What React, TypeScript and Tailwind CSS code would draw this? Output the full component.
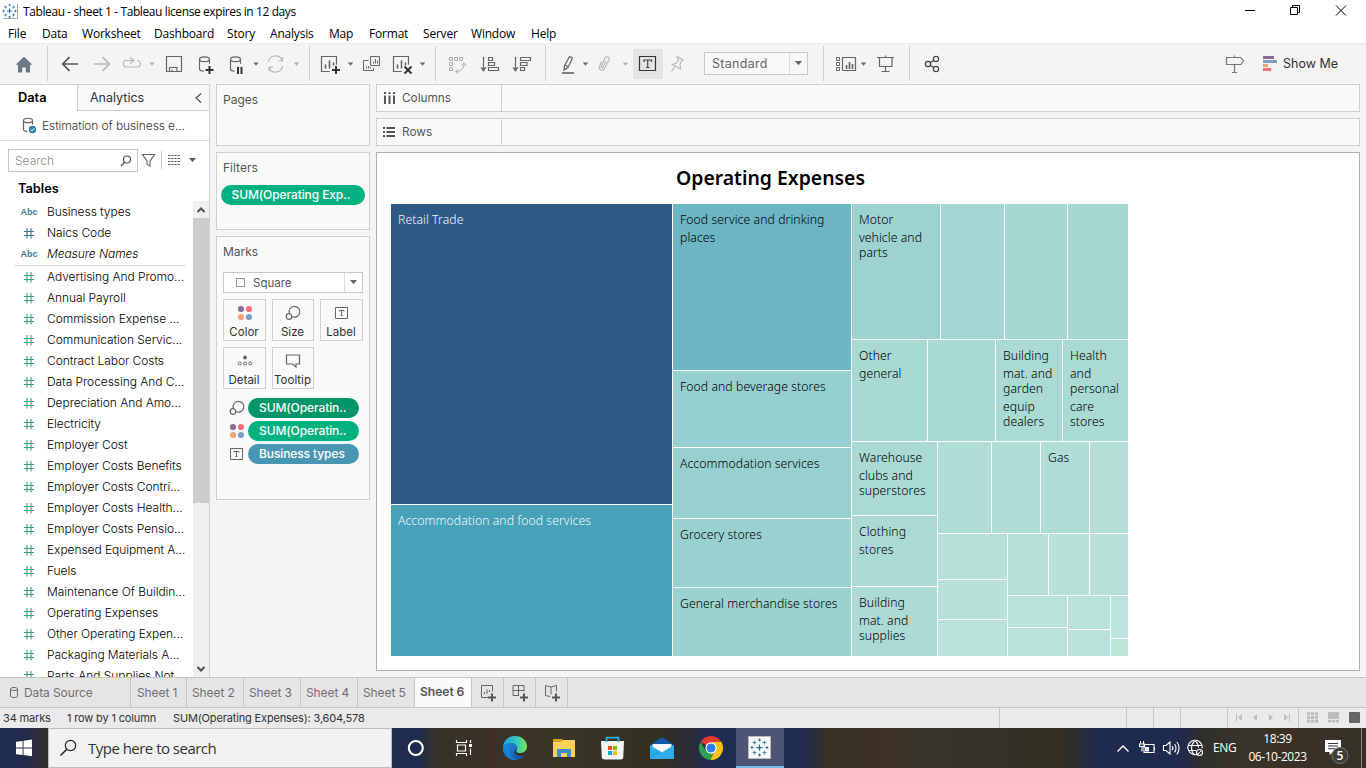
import React from 'react';

type Box = { c?: string; label?: string[]; light?: boolean; w?: string; h?: string };

/* A glyph slot whose drawing uses window coordinates. */
function Slot({ x, y, w, h, children }: { x: number; y: number; w: number; h: number; children?: React.ReactNode }) {
  return (
    <svg className="block shrink-0" width={w} height={h} viewBox={`${x} ${y} ${w} ${h}`} fill="none" stroke="#666" strokeWidth="1.2">
      {children}
    </svg>
  );
}

const Caret = ({ x, y = 64, c = '#666' }: { x: number; y?: number; c?: string }) => (
  <path d={`M${x - 2.7} ${y - 1.5}h5.4L${x} ${y + 1.8}z`} fill={c} stroke="none" />
);

const Divider = () => <div className="h-[35px] w-px shrink-0 bg-[#cfcfcf]" />;

function Cell({ c = 'bg-[#a9dad4]', label, light, w = '', h = '' }: Box) {
  return (
    <div className={`${c} ${w} ${h} shrink-0 overflow-hidden pl-[7px] pt-[8px] text-[12.2px] leading-[16.6px] font-light tracking-[0.08px] whitespace-nowrap ${light ? 'text-[#f4f8fb]' : 'text-[#000]'}`}>
      {label?.map((l, i) => <div key={l} className={i % 2 === 1 ? 'pt-px -mb-px' : ''}>{l}</div>)}
    </div>
  );
}

function Treemap() {
  return (
    <div className="flex h-[452px] w-[737px] gap-px bg-white font-['Noto_Sans',sans-serif]">
      <div className="flex w-[281px] flex-col gap-px">
        <Cell c="bg-[#2c5985]" h="h-[300px]" light label={['Retail Trade']} />
        <Cell c="bg-[#46a1b9]" h="h-[151px]" light label={['Accommodation and food services']} />
      </div>
      <div className="flex w-[178px] flex-col gap-px">
        <Cell c="bg-[#6cb6c4]" h="h-[166px]" label={['Food service and drinking', 'places']} />
        <Cell c="bg-[#96cfcf]" h="h-[76px]" label={['Food and beverage stores']} />
        <Cell c="bg-[#98d0d0]" h="h-[70px]" label={['Accommodation services']} />
        <Cell c="bg-[#99d1d0]" h="h-[68px]" label={['Grocery stores']} />
        <Cell c="bg-[#9ad2d0]" h="h-[68px]" label={['General merchandise stores']} />
      </div>
      <div className="flex w-[276px] flex-col gap-px">
        <div className="flex h-[135px] gap-px">
          <Cell c="bg-[#9cd3d1]" w="w-[88px]" label={['Motor', 'vehicle and', 'parts']} />
          <Cell c="bg-[#a4d7d3]" w="w-[63px]" />
          <Cell c="bg-[#a5d8d3]" w="w-[62px]" />
          <Cell c="bg-[#a6d8d3]" w="w-[60px]" />
        </div>
        <div className="flex h-[101px] gap-px">
          <Cell c="bg-[#a8d9d3]" w="w-[75px]" label={['Other', 'general']} />
          <Cell c="bg-[#a8d9d3]" w="w-[67px]" />
          <Cell c="bg-[#a9dad4]" w="w-[66px]" label={['Building', 'mat. and', 'garden', 'equip', 'dealers']} />
          <Cell c="bg-[#a9dad4]" w="w-[65px]" label={['Health', 'and', 'personal', 'care', 'stores']} />
        </div>
        <div className="flex h-[214px] gap-px">
          <div className="flex w-[85px] flex-col gap-px">
            <Cell c="bg-[#aadad4]" h="h-[73px]" label={['Warehouse', 'clubs and', 'superstores']} />
            <Cell c="bg-[#abdad4]" h="h-[70px]" label={['Clothing', 'stores']} />
            <Cell c="bg-[#acdbd5]" h="h-[69px]" label={['Building', 'mat. and', 'supplies']} />
          </div>
          <div className="flex w-[190px] flex-col gap-px">
            <div className="flex h-[91px] gap-px">
              <Cell c="bg-[#b0ddd6]" w="w-[53px]" />
              <Cell c="bg-[#b0ddd6]" w="w-[48px]" />
              <Cell c="bg-[#b1ddd7]" w="w-[48px]" label={['Gas']} />
              <Cell c="bg-[#b4dfd7]" w="w-[38px]" />
            </div>
            <div className="flex h-[122px] gap-px">
              <div className="flex w-[69px] flex-col gap-px">
                <Cell c="bg-[#b6e1d7]" h="h-[45px]" />
                <Cell c="bg-[#b7e2d8]" h="h-[39px]" />
                <Cell c="bg-[#b8e3d8]" h="h-[36px]" />
              </div>
              <div className="flex w-[120px] flex-col gap-px">
                <div className="flex h-[61px] gap-px">
                  <Cell c="bg-[#b6e1d7]" w="w-[40px]" />
                  <Cell c="bg-[#b7e2d8]" w="w-[40px]" />
                  <Cell c="bg-[#b7e2d8]" w="w-[38px]" />
                </div>
                <div className="flex h-[60px] gap-px">
                  <div className="flex w-[59px] flex-col gap-px">
                    <Cell c="bg-[#b8e3d8]" h="h-[31px]" />
                    <Cell c="bg-[#b8e3d8]" h="h-[28px]" />
                  </div>
                  <div className="flex w-[42px] flex-col gap-px">
                    <Cell c="bg-[#b9e3d9]" h="h-[33px]" />
                    <Cell c="bg-[#b9e3d9]" h="h-[26px]" />
                  </div>
                  <div className="flex w-[17px] flex-col gap-px">
                    <Cell c="bg-[#bbe5da]" h="h-[42px]" />
                    <Cell c="bg-[#bce5da]" h="h-[17px]" />
                  </div>
                </div>
              </div>
            </div>
          </div>
        </div>
      </div>
    </div>
  );
}

function TableauMark({ x, y, s }: { x: number; y: number; s: number }) {
  const plus = (cx: number, cy: number, r: number) => `M${cx - r} ${cy}h${2 * r}M${cx} ${cy - r}v${2 * r}`;
  return (
    <g transform={`translate(${x} ${y}) scale(${s})`} fill="none">
      <path d={plus(0, 0, 2.4)} stroke="#1f6a96" strokeWidth="1" />
      <path d={plus(-4, -4, 1.5) + plus(4, -4, 1.5) + plus(-4, 4, 1.5) + plus(4, 4, 1.5)} stroke="#4a8db5" strokeWidth=".9" />
      <path d={plus(0, -6, 1.2) + plus(0, 6, 1.2) + plus(-6, 0, 1.2) + plus(6, 0, 1.2)} stroke="#2f7ba6" strokeWidth=".9" />
    </g>
  );
}

function TitleBar() {
  return (
    <div className="flex h-[23px] items-center bg-white">
      <Slot x={0} y={0} w={23} h={23}>
        <path d="M3 18.5h14.500V4" stroke="#aaa" strokeWidth="1" />
        <TableauMark x={9.500} y={11} s={1} />
      </Slot>
      <span className="flex-1 pt-px text-[12px] tracking-[-0.4px] text-black">Tableau - sheet 1 - Tableau license expires in 12 days</span>
      <Slot x={1226} y={0} w={140} h={23}>
        <path d="M1245 10.500h10M1290.500 7.500h7v7h-7zM1292.500 7.500v-2h7v7h-2M1336 5.500l10 10M1346 5.500l-10 10" stroke="#000" strokeWidth="1" />
      </Slot>
    </div>
  );
}

const menus: [string, string][] = [
  ['File', 'w-[34px]'], ['Data', 'w-[40px]'], ['Worksheet', 'w-[72px]'], ['Dashboard', 'w-[73px]'], ['Story', 'w-[43px]'],
  ['Analysis', 'w-[59px]'], ['Map', 'w-[40px]'], ['Format', 'w-[54px]'], ['Server', 'w-[48px]'], ['Window', 'w-[60px]'], ['Help', 'w-[40px]'],
];

function ChartBox({ x, y, w, h, c = '#666' }: { x: number; y: number; w: number; h: number; c?: string }) {
  return (
    <g stroke={c}>
      <path d={`M${x + w * 0.55} ${y + h}H${x}V${y}H${x + w}V${y + h * 0.55}`} strokeWidth="1.2" />
      <path d={`M${x + 4} ${y + 12}v-4M${x + 8} ${y + 12}v-8M${x + 12} ${y + 9}v-3`} strokeWidth="1.600" />
    </g>
  );
}

function Toolbar() {
  return (
    <div className="flex h-[41px] items-center bg-[#f4f4f4] shadow-[inset_0_1px_0_#ececec]">
      <Slot x={0} y={43} w={47} h={41}>
        <path d="M24 56.700l8.500 8h-2.500v7.800h-4.200v-5h-3.600v5H18v-7.800h-2.500z" fill="#6c7786" stroke="none" />
      </Slot>
      <Divider />
      <Slot x={48} y={43} w={261} h={41}>
        <path d="M78 64H63M69.500 57.200L62.700 64l6.800 6.800" strokeWidth="1.700" stroke="#555" />
        <path d="M94 64h15M102.500 57.200l6.800 6.800-6.800 6.800" strokeWidth="1.700" stroke="#b8b8b8" />
        <path d="M133 60.500h-6.500a3 3 0 0 0 0 6.500H137a3.200 3.200 0 0 0 0-6.500M130 57.500l4 3-4 3" stroke="#b8b8b8" />
        <Caret x={152} c="#b0b0b0" />
        <path d="M166.500 56.500h15v15h-15zM169.500 71.500v-4h7.500v4M172 71.500v-2" />
        <path d="M199.500 59.200c0-3.200 10-3.200 10 0s-10 3.200-10 0zM199.500 59.200v9.500c0 1.600 2 2.300 4.500 2.400M209.500 59.200v4.500" />
        <path d="M205.500 70h8M209.500 66v8" stroke="#333" strokeWidth="2" />
        <path d="M230.500 59.200c0-3.200 10-3.200 10 0s-10 3.200-10 0zM230.500 59.200v9.500c0 1.600 2 2.300 4 2.400M240.500 59.200v4.500" />
        <path d="M238 67v7M241.500 67v7" stroke="#333" strokeWidth="2" />
        <Caret x={256} />
        <path d="M268.500 62a7 7 0 0 1 13.500-1.500M282.500 66a7 7 0 0 1-13.500 1.500M278.500 61h4v-4M273 67.200h-4v4" stroke="#b8b8b8" />
        <Caret x={296.500} c="#b0b0b0" />
      </Slot>
      <Divider />
      <Slot x={310} y={43} w={125} h={41}>
        <ChartBox x={321.500} y={56.500} w={15} h={15} />
        <path d="M332 70h8M336 66v8" stroke="#333" strokeWidth="2" />
        <Caret x={350.500} />
        <path d="M370.500 56.500h9v9h-9zM368.500 60.500h-5v10h10v-2.500M373.500 63.500v-2M375.500 63.500v-4.500M377.500 63.500v-3M366.500 68.500v-2M368.500 68.500v-2.500M370.500 68.500v-1.500" strokeWidth="1" />
        <ChartBox x={393.500} y={56.500} w={15} h={15} />
        <path d="M404.500 66.500l7 7M411.500 66.500l-7 7" stroke="#333" strokeWidth="2" />
        <Caret x={422.500} />
      </Slot>
      <Divider />
      <Slot x={436} y={43} w={109} h={41}>
        <path d="M449.500 57.500h3v3h-3zM454.500 57.500h3v3h-3zM459.500 57.500h3v3h-3zM449.500 62.500h3v3h-3zM449.500 67.500h3v3h-3zM456 71.500c5.500 0 8-3 8-8M461.500 66l2.500-3 2 3M458.500 69l-3 2.500 3 2" stroke="#b0b0b0" strokeWidth="1" />
        <path d="M483.500 57v13M481.500 68l2 3 2-3zM488.500 57.500h4v3h-4zM488.500 62.500h6v3h-6zM488.500 67.500h10v3h-10z" strokeWidth="1.200" />
        <path d="M515.500 57v13M513.500 68l2 3 2-3zM520.500 57.500h10v3h-10zM520.500 62.500h6.500v3h-6.500zM520.500 67.500h4v3h-4z" strokeWidth="1.200" />
      </Slot>
      <Divider />
      <Slot x={546} y={43} w={87} h={41}>
        <path d="M562 73h12" strokeWidth="1.700" />
        <path d="M569.500 56.500l3 1.500-4.500 9.500-4 2.500.5-4.200zM565 65l3.200 1.800" />
        <Caret x={585.500} />
        <path d="M601.500 61.500l-2 5a2.600 2.600 0 0 0 5 2l4.500-8.500a2 2 0 0 0-4-2l-3.800 8.300a.9.900 0 0 0 1.800.8l3-6" stroke="#b8b8b8" strokeWidth="1.200" />
        <Caret x={625.500} c="#b0b0b0" />
      </Slot>
      <div className="mt-px flex h-[30px] w-[30px] items-center justify-center bg-[#e4e4e4]">
        <Slot x={633} y={49} w={30} h={30}>
          <path d="M639.500 56.500h16v14h-16z" stroke="#333" />
          <path d="M644 62v-2h7.500v2M647.700 60v7.500M646 67.500h3.500" stroke="#444" strokeWidth="1.200" />
        </Slot>
      </div>
      <Slot x={663} y={43} w={41} h={41}>
        <path d="M677 56.500l6 3.500-1.500 1-1.500 3.500.5 4.500-8-4.500 4-1.500 2-3zM675 66.500l-3.500 5" stroke="#b8b8b8" strokeWidth="1.200" />
      </Slot>
      <div className="flex h-[23px] w-[104px] items-center border border-[#c9c9c9] bg-[#f8f8f8] font-['Inter',sans-serif]">
        <span className="flex-1 pt-px pl-[7px] text-[12.500px] tracking-[0.3px] text-[#666]">Standard</span>
        <div className="flex h-full w-[18px] items-center justify-center border-l border-[#dcdcdc]">
          <svg width="7" height="5"><path d="M0 0h7L3.500 4.200z" fill="#666" /></svg>
        </div>
      </div>
      <div className="w-[15px]" />
      <Divider />
      <Slot x={824} y={43} w={85} h={41}>
        <path d="M836.500 57.500h3v3h-3zM836.500 62.500h3v3h-3zM836.500 67.500h3v3h-3z" strokeWidth="1" />
        <path d="M842.500 57.500h13v13h-13z" />
        <path d="M846.500 69v-4M849.500 69v-7M852.500 69v-5" strokeWidth="1.700" />
        <Caret x={863.500} />
        <path d="M877 57.500h17M879.500 58v8.500h12.500V58M885.500 67v4.500M881.500 71.500h8M885.500 55.500v2" />
      </Slot>
      <Divider />
      <Slot x={910} y={43} w={53} h={41}>
        <path d="M930.200 62.700l3.500-2.200M930.200 65.300l3.500 2.200" stroke="#444" />
        <g stroke="#444"><circle cx="928" cy="64" r="2.600" /><circle cx="936" cy="59" r="2.600" /><circle cx="936" cy="69" r="2.600" /></g>
      </Slot>
      <div className="flex-1" />
      <Slot x={1216} y={43} w={67} h={41}>
        <path d="M1226.500 57.500h14.500l2.500 3.500-2.500 3.500h-14.500zM1234.500 55.500v2M1234.500 64.500v7.500M1232 72.500h5" stroke="#777" />
        <path d="M1263 56h11v3h-11z" fill="#8a6d96" stroke="none" />
        <path d="M1263 60h14v3h-14z" fill="#7f9fc9" stroke="none" />
        <path d="M1263 64h5v3h-5z" fill="#f3a57b" stroke="none" />
        <path d="M1263 68h8v3h-8z" fill="#fb6b7e" stroke="none" />
      </Slot>
      <span className="w-[83px] pt-px font-['Inter',sans-serif] text-[12.500px] text-[#333]">Show Me</span>
    </div>
  );
}

function Hash({ c }: { c: string }) {
  return <svg className="block" width="12" height="12" fill="none" stroke={c} strokeWidth="1.100"><path d="M1 4.500h10M1 8.500h10M4 1v10.500M8 1v10.500" /></svg>;
}

const measures = [
  'Advertising And Promo...', 'Annual Payroll', 'Commission Expense ...', 'Communication Servic...', 'Contract Labor Costs',
  'Data Processing And C...', 'Depreciation And Amo...', 'Electricity', 'Employer Cost', 'Employer Costs Benefits', 'Employer Costs Contri...',
  'Employer Costs Health...', 'Employer Costs Pensio...', 'Expensed Equipment A...', 'Fuels', 'Maintenance Of Buildin...', 'Operating Expenses',
  'Other Operating Expen...', 'Packaging Materials A...', 'Parts And Supplies Not ..',
];

function Field({ name, kind, italic }: { name: string; kind: 'abc' | 'dim' | 'mea'; italic?: boolean }) {
  return (
    <div className="flex h-[21px] shrink-0 items-center whitespace-nowrap">
      <div className="flex w-[29px] justify-center">
        {kind === 'abc'
          ? <span className="pt-[2px] pl-px font-['Liberation_Sans',sans-serif] text-[9px] font-bold text-[#3a7fa3]">Abc</span>
          : <Hash c={kind === 'dim' ? '#2e7597' : '#3c9f7b'} />}
      </div>
      <span className={`pt-px pl-[4px] text-[12px] font-light tracking-[-0.06px] text-black ${italic ? 'italic' : ''}`}>{name}</span>
    </div>
  );
}

function DataPane() {
  return (
    <div className="flex h-[593px] w-[210px] shrink-0 flex-col overflow-hidden border-t border-r border-[#d0d0d0] bg-white font-['Inter',sans-serif]">
      <div className="flex h-[26px] shrink-0 text-[12.500px]">
        <div className="flex w-[77px] items-center pl-[18px] text-[12.800px] font-semibold text-black">Data</div>
        <div className="flex flex-1 items-center border-b border-l border-[#d0d0d0] bg-[#f9f9f9] pl-[12px] text-[#333]">
          <span className="flex-1 pt-px">Analytics</span>
          <svg width="20" height="12" fill="none" stroke="#555" strokeWidth="1.300"><path d="M12 1.500L7 6l5 4.500" /></svg>
        </div>
      </div>
      <div className="flex h-[30px] shrink-0 items-center border-b border-[#dedede]">
        <Slot x={0} y={111} w={42} h={29}>
          <path d="M23.500 120.500c0-3 9-3 9 0s-9 3-9 0zM23.500 120.500v9c0 1.300 2 2 4 2.200M32.500 120.500v4" stroke="#666" />
          <circle cx="32.500" cy="129.500" r="3.700" fill="#2f7fa8" stroke="none" />
          <path d="M30.700 129.500l1.400 1.400 2.400-2.700" stroke="#fff" strokeWidth="1" />
        </Slot>
        <span className="text-[12px] font-light tracking-[-0.1px] text-[#333]">Estimation of business e...</span>
      </div>
      <div className="flex h-[39px] shrink-0 items-center pl-[8px]">
        <div className="flex h-[23px] w-[130px] items-center border border-[#c4c4c4] pl-[6px]">
          <span className="flex-1 text-[12px] font-light text-[#888]">Search</span>
          <svg width="17" height="14" fill="none" stroke="#555" strokeWidth="1.200"><circle cx="7" cy="5.500" r="3.500" /><path d="M4.500 8L1 12" /></svg>
        </div>
        <Slot x={138} y={141} w={71} h={39}>
          <path d="M142.500 154.500h12l-4.500 6.500v5l-3-1.500v-3.500z" strokeWidth="1.200" />
          <path d="M161.500 151v18" stroke="#ccc" strokeWidth="1" />
          <path d="M168 155.500h12M168 158.500h12M168 161.500h12M168 164.500h12" stroke="#555" strokeWidth="1" strokeDasharray="2.300 .9" />
          <path d="M189 158h7l-3.500 4z" fill="#555" stroke="none" />
        </Slot>
      </div>
      <div className="flex h-[21px] shrink-0 items-start pl-[18px] text-[12.800px] font-semibold leading-[17px] text-black">Tables</div>
      <div className="flex min-h-0 flex-1">
        <div className="flex w-[193px] flex-col overflow-hidden pl-[14px]">
          <Field name="Business types" kind="abc" />
          <Field name="Naics Code" kind="dim" />
          <Field name="Measure Names" kind="abc" italic />
          <div className="mr-[7px] h-[2px] shrink-0 border-b border-[#d8d8d8]" />
          {measures.map((m) => <Field key={m} name={m} kind="mea" />)}
        </div>
        <div className="flex w-[16px] flex-col items-center bg-[#f0f0f0]">
          <svg className="h-[17px] shrink-0" width="16" height="17" fill="none" stroke="#505050" strokeWidth="2"><path d="M4.500 11L8 7.500l3.500 3.500" /></svg>
          <div className="h-[285px] w-full bg-[#cdcdcd]" />
          <div className="flex-1" />
          <svg className="shrink-0" width="16" height="17" fill="none" stroke="#505050" strokeWidth="2"><path d="M4.500 7L8 10.500 11.500 7" /></svg>
        </div>
      </div>
    </div>
  );
}

const SizeGlyph = () => <svg width="16" height="16" fill="none" stroke="#666" strokeWidth="1.200"><path d="M4.300 8.200a5.400 5.400 0 1 1 2.700 3.300" /><circle cx="4" cy="11.500" r="2.800" /></svg>;
const ColorGlyph = () => <svg width="16" height="16"><circle cx="4" cy="4" r="3.100" fill="#8a6d96" /><circle cx="12" cy="4" r="3.100" fill="#fb6b7e" /><circle cx="4" cy="12" r="3.100" fill="#f3a57b" /><circle cx="12" cy="12" r="3.100" fill="#7f9fc9" /></svg>;
const TextGlyph = () => <svg width="14" height="12" fill="none" stroke="#666"><path d="M.5.5h12v11H.5zM4 4.500v-1h5v1M6.500 3.500v5M5.500 8.500h2" /></svg>;
const DetailGlyph = () => <svg width="16" height="12" fill="none" stroke="#666"><circle cx="8" cy="2.500" r="2" fill="#666" stroke="none" /><circle cx="2.800" cy="8.500" r="1.500" /><circle cx="8" cy="8.500" r="1.500" /><circle cx="13.200" cy="8.500" r="1.500" /></svg>;
const TipGlyph = () => <svg width="16" height="14" fill="none" stroke="#666" strokeWidth="1.200"><path d="M1.500 1h13v9h-3.500v3l-3.500-3h-6z" /></svg>;

function MarkButton({ label, w, children }: { label: string; w: string; children: React.ReactNode }) {
  return (
    <div className={`${w} flex h-[42px] flex-col items-center border border-[#d0d0d0] bg-[#fafafa] whitespace-nowrap`}>
      <div className="flex h-[25px] items-center justify-center pt-px">{children}</div>
      <span className="pr-px text-[11.500px] leading-[14px] text-[#333]">{label}</span>
    </div>
  );
}

function Pill({ c, icon, label }: { c: string; icon: React.ReactNode; label: string }) {
  return (
    <div className="flex h-[20px] items-center">
      <div className="flex w-[23px] items-center justify-center">{icon}</div>
      <div className={`${c} flex h-[20px] w-[111px] items-center rounded-full pb-px pl-[11px] text-[12px] font-medium tracking-[-0.1px] whitespace-nowrap text-white`}>{label}</div>
    </div>
  );
}

function Cards() {
  return (
    <div className="flex w-[154px] shrink-0 flex-col gap-[6px] font-['Inter',sans-serif] text-[12px] text-[#555]">
      <div className="h-[62px] border border-[#d0d0d0] bg-[#fafafa] pt-[6px] pl-[6px] leading-[17px]">Pages</div>
      <div className="h-[78px] border border-[#d0d0d0] bg-[#fafafa] pt-[6px] pl-[4px] leading-[17px]">
        <div className="pl-[2px]">Filters</div>
        <div className="mt-[9px] flex h-[20px] w-[144px] items-center rounded-full bg-[#00b180] pb-px pl-[10.5px] font-medium tracking-[-0.1px] whitespace-nowrap text-white">SUM(Operating Exp..</div>
      </div>
      <div className="h-[264px] border border-[#d0d0d0] bg-[#fafafa] pt-[6px] pl-[6px] leading-[17px]">
        <div>Marks</div>
        <div className="mt-[12px] flex h-[21px] w-[140px] items-center border border-[#c9c9c9] bg-white">
          <div className="mr-[8px] ml-[12px] h-[9px] w-[9px] border border-[#999]" />
          <span className="flex-1 pt-px text-[11.500px]">Square</span>
          <div className="flex h-full w-[18px] items-center justify-center border-l border-[#dcdcdc]">
            <svg width="7" height="5"><path d="M0 0h7L3.500 4.200z" fill="#666" /></svg>
          </div>
        </div>
        <div className="mt-[6px] flex gap-[6px]">
          <MarkButton label="Color" w="w-[43px]"><ColorGlyph /></MarkButton>
          <MarkButton label="Size" w="w-[42px]"><SizeGlyph /></MarkButton>
          <MarkButton label="Label" w="w-[43px]"><TextGlyph /></MarkButton>
        </div>
        <div className="mt-[6px] flex gap-[6px]">
          <MarkButton label="Detail" w="w-[43px]"><DetailGlyph /></MarkButton>
          <MarkButton label="Tooltip" w="w-[42px]"><TipGlyph /></MarkButton>
        </div>
        <div className="mt-[9px] flex flex-col gap-[3px] pl-[2px]">
          <Pill c="bg-[#00966a]" icon={<SizeGlyph />} label="SUM(Operatin.." />
          <Pill c="bg-[#00b180]" icon={<ColorGlyph />} label="SUM(Operatin.." />
          <Pill c="bg-[#4996b2]" icon={<TextGlyph />} label="Business types" />
        </div>
      </div>
    </div>
  );
}

function Shelf({ name, icon }: { name: string; icon: React.ReactNode }) {
  return (
    <div className="flex h-[28px] w-[984px] border border-[#d0d0d0] bg-[#fafafa] font-['Inter',sans-serif] text-[11.800px] text-[#555]">
      <div className="flex w-[125px] items-center border-r border-[#d0d0d0] pl-[6px]">
        {icon}
        <span className="pt-px pl-[7px]">{name}</span>
      </div>
    </div>
  );
}

function SheetTabs() {
  const tab = 'flex h-full items-center border-r border-[#c6c6c6] pl-[6px] whitespace-nowrap';
  return (
    <div className="flex h-[31px] border-t border-b border-[#c6c6c6] bg-[#e5e5e5] font-['Inter',sans-serif] text-[12px] tracking-[-0.1px] text-[#707070]">
      <div className="flex h-full w-[131px] items-center border-r border-[#c6c6c6]">
        <svg width="24" height="14" fill="none" stroke="#666"><path d="M10.500 3c0-2 7-2 7 0s-7 2-7 0zM10.500 3v7c0 2 7 2 7 0V3" /></svg>
        Data Source
      </div>
      <div className={`${tab} w-[56px]`}>Sheet 1</div>
      {[2, 3, 4, 5].map((n) => <div key={n} className="flex h-full w-[57px] items-center border-r border-[#c6c6c6] pl-[5px] whitespace-nowrap">Sheet {n}</div>)}
      <div className="flex h-full w-[57px] items-center border-r border-[#c6c6c6] bg-[#fafafa] pb-px pl-[5px] text-[12.200px] font-semibold whitespace-nowrap text-[#555]">Sheet 6</div>
      <Slot x={472} y={678} w={96} h={29}>
        <path d="M488 697.500h-6.500v-12h11v6M484.500 694v-2M487 694v-4.500M489.500 692v-2M519 695.500h-6v-10h11v6M513 690.500h11M518.500 685.500v10M551 694.500v-7.500l-5.500-1.500v10l4.500 1M551 687l5.500-1.500v6" strokeWidth="1" />
        <path d="M488 697.500h8M492 693.500v8M520 697.500h8M524 693.500v8M552 697.500h8M556 693.500v8" stroke="#555" strokeWidth="2" />
        <path d="M503.500 678v29M535.500 678v29M567.500 678v29" stroke="#c6c6c6" strokeWidth="1" />
      </Slot>
    </div>
  );
}

function StatusBar() {
  return (
    <div className="flex h-[20px] items-center bg-[#eaeaea] font-['Inter',sans-serif] text-[11px] tracking-[-0.15px] text-[#333]">
      <span className="w-[64px] pl-[3px]">34 marks</span>
      <span className="w-[106px] pl-[3px]">1 row by 1 column</span>
      <span className="flex-1 pl-[3px]">SUM(Operating Expenses): 3,604,578</span>
      <Slot x={990} y={708} w={376} h={20}>
        <path d="M999.500 708v20M1126.500 708v20M1153.500 708v20M1180.500 708v20M1227.500 708v20M1298.500 708v20" stroke="#c6c6c6" strokeWidth="1" />
        <path d="M1236 714h1v7h-1zM1242 714v7l-4-3.500zM1257 714v7l-4-3.500zM1269 714v7l4-3.500zM1284 714v7l4-3.500zM1289 714h1v7h-1z" fill="#bdbdbd" stroke="none" />
        <path d="M1307 713.700h11M1307 717.500h11M1307 721.300h11" stroke="#bdbdbd" strokeWidth="3" strokeDasharray="3.200 .8" />
        <path d="M1328 712h11v7h-11z" fill="#bdbdbd" stroke="none" />
        <path d="M1328 721.300h11" stroke="#bdbdbd" strokeWidth="2.600" strokeDasharray="3.200 .8" />
        <rect x="1349" y="712" width="11" height="11" rx="1" fill="#666" stroke="none" />
      </Slot>
    </div>
  );
}

function Taskbar() {
  return (
    <div className="flex h-[40px] bg-[linear-gradient(90deg,#1f2b4f_0,#1f2b4f_20px,#30302f_44px,#30302f_48px,#1f2b50_392px,#1f2b50_418px,#343226_436px,#3c3026_490px,#3a3626_550px,#332f22_660px,#2a2c38_690px,#1f2b50_708px,#1f2b50_802px,#333224_826px,#3e3026_880px,#37352a_930px,#312f22_1066px,#1e2a4e_1096px,#1e2a4e_1180px,#302f2a_1204px,#37352a_1250px,#3c3026_1280px,#343226_1366px)]">
      <Slot x={0} y={728} w={48} h={40}>
        <path d="M16 741.800l6.600-.9v6.600H16zM23.500 740.800l8.500-1.200v7.900h-8.500zM16 748.500h6.600v6.600l-6.600-.9zM23.500 748.500H32v7.800l-8.500-1.200z" fill="#fff" stroke="none" />
      </Slot>
      <div className="flex w-[344px] items-center border border-[#bdbdbd] bg-[#f2f2f2]">
        <Slot x={49} y={729} w={39} h={38}>
          <circle cx="70.500" cy="745.500" r="5.200" stroke="#222" /><path d="M66.800 749.300L60.500 755.500" stroke="#222" strokeWidth="1.500" />
        </Slot>
        <span className="text-[15px] tracking-[-0.52px] text-[#333]">Type here to search</span>
      </div>
      <Slot x={392} y={728} w={344} h={40}>
        <circle cx="415.800" cy="748" r="7" stroke="#fff" strokeWidth="2" />
        <path d="M456.500 740v2.500h10V740M456.500 756v-2.500h10v2.500M457.500 745h8v6h-8zM470.500 740v3M470.500 748.500v6.500" stroke="#fff" strokeWidth="1.200" />
        <path d="M469 744h3v3h-3z" fill="#fff" stroke="none" />
        <defs>
          <linearGradient id="eg1" x1="0" x2="1"><stop offset="0" stopColor="#1d9fe0" /><stop offset=".55" stopColor="#32c6c3" /><stop offset="1" stopColor="#76ea52" /></linearGradient>
          <linearGradient id="eg2" x1="0" y1="0" x2="1" y2="1"><stop offset="0" stopColor="#1a8fdc" /><stop offset="1" stopColor="#0f4f9e" /></linearGradient>
          <linearGradient id="ml" x1="0" y1="0" x2="1" y2="1"><stop offset="0" stopColor="#2fb8ee" /><stop offset="1" stopColor="#1787d8" /></linearGradient>
        </defs>
        <g stroke="none">
          <path d="M503 748c0-8 5.500-12 12-12 7 0 12 5 12 10.500 0 4-3 6.500-7 6.500-3 0-4.500-1.200-3.500-2.600 2-3-.5-6.900-5-6.900-4 0-8.500 2-8.500 4.500z" fill="url(#eg1)" />
          <path d="M503 748c0-3 4-5 8-5 4.500 0 7 3.500 5.500 6.500-3.500 1-3 5.500 2.500 6.500 2.500.4 4.500-.3 6-1.200-2 3.200-5.500 5.200-10 5.200-7 0-12-5-12-12z" fill="url(#eg2)" />
          <path d="M511.500 744c-5 5-1.500 13.500 5.500 16-8 .6-14-5-14-12 0-2.500 5-4.500 8.500-4z" fill="#1683d8" opacity=".8" />
          <path d="M553 739h9l2 2.500h-11z" fill="#e0a21b" /><path d="M553 741.500h8l2-1.500h12v17h-22z" fill="#fdcf5b" />
          <path d="M557 749h14v8h-4v-4h-6v4h-4z" fill="#3d8fd1" />
          <path d="M601 741h23l-.7 16q0 2.500-3 2.500h-15.500q-3 0-3-2.500z" fill="#f4f4f4" />
          <path d="M608 746h4v4h-4z" fill="#f25022" /><path d="M613 746h4v4h-4z" fill="#7fba00" /><path d="M608 751h4v4h-4z" fill="#00a4ef" /><path d="M613 751h4v4h-4z" fill="#ffb900" />
          <path d="M606.500 742v-4.300h12v4.300" fill="none" stroke="#28b1e8" strokeWidth="1.800" />
          <path d="M650 745l12-8 12 8v14h-24z" fill="#0e5ba8" /><path d="M650 745l12 7.500 12-7.500v14h-24z" fill="url(#ml)" /><path d="M652.500 744h19v2.700l-9.500 5.800-9.500-5.800z" fill="#f4f7fb" /><path d="M650 759l12-6.500 4-2.500 8-5v14z" fill="#3dbdf2" opacity=".6" />
          <path d="M711 742h10.400l-5 8.500z" fill="#fbc116" /><path d="M711 748L721.400 742A12 12 0 0 1 711 760z" fill="#fbc116" />
          <path d="M700.600 742A12 12 0 0 1 721.400 742H711z" fill="#e33b2e" /><path d="M711 748L700.600 742l6-1h6z" fill="#e33b2e" />
          <path d="M700.600 742l5.200 9 5.200 3 3-1-3.500 7A12 12 0 0 1 700.600 742z" fill="#2fa24c" />
          <circle cx="711" cy="748" r="5.700" fill="#fff" /><circle cx="711" cy="748" r="4.500" fill="#2f7cec" />
        </g>
      </Slot>
      <div className="w-[48px] border-b-2 border-[#76b9ed] bg-[#4b5574]">
        <Slot x={736} y={728} w={48} h={38}>
          <path d="M748.500 736.500h22v22h-22z" fill="#f6f8fa" stroke="#bbb" strokeWidth="1" />
          <TableauMark x={759.500} y={747.500} s={1.250} />
        </Slot>
      </div>
      <div className="flex-1" />
      <Slot x={1104} y={728} w={108} h={40}>
        <path d="M1117.500 751.500l5.500-5.500 5.500 5.500" stroke="#fff" strokeWidth="1.400" />
        <path d="M1144 744.500h10v8h-10zM1154.500 747.500v2.500M1140.500 741v2.500M1143.500 741v2.500M1139.500 744h5v2.500h-5zM1142 747v4.500" stroke="#fff" strokeWidth="1.100" /><path d="M1145 747h4v4.500h-4z" fill="#fff" stroke="none" />
        <path d="M1163.500 745.500h2.500l4-3.500v12l-4-3.500h-2.500zM1172 746c1 1.200 1 3.200 0 4.200M1174.500 744c2 2.300 2 6.200 0 8.400M1176.800 742c3 3.400 3 9 0 12.500" stroke="#fff" strokeWidth="1.100" />
        <path d="M1199 753.500a7.200 7.200 0 1 1 3.200-5M1188 745.500h14M1188 750.500h8M1194.500 741c-4 4-4 10 0 14M1195.500 741c2 2 3 4 3 6.500" stroke="#fff" strokeWidth="1.100" />
        <circle cx="1199.500" cy="752.500" r="3" stroke="#fff" strokeWidth="1.100" /><path d="M1197.500 754.500l4-4" stroke="#fff" strokeWidth="1" />
      </Slot>
      <div className="flex w-[30px] items-center pl-px text-[12px] tracking-[-0.4px] text-white">ENG</div>
      <div className="flex w-[71px] flex-col items-center justify-center text-[12px] leading-[18px] tracking-[-0.45px] whitespace-nowrap text-white">
        <span>18:39</span>
        <span>06-10-2023</span>
      </div>
      <div className="w-[11px]" />
      <svg width="42" height="40" viewBox="1324 728 42 40" fill="none">
        <path d="M1325 740h16v12h-8l-3.500 3v-3h-4.500z" fill="#fff" /><path d="M1328 743.500h10M1328 746h10M1328 748.700h7" stroke="#333" />
        <circle cx="1340" cy="755.500" r="8" fill="#3d3d3a" stroke="#777" />
        <text x="1340" y="759.500" textAnchor="middle" fill="#fff" fontSize="12" fontWeight="600" fontFamily="Open Sans">5</text>
        <path d="M1361.500 728v40" stroke="#8a8a80" />
      </svg>
    </div>
  );
}

export default function App() {
  return (
    <div className="flex h-[768px] w-[1366px] flex-col overflow-hidden bg-[#f4f4f4] font-['Open_Sans',sans-serif]">
      <TitleBar />
      <div className="flex h-[20px] items-center bg-white pt-[2px] pl-[8px] text-[12px] tracking-[-0.2px] text-black">
        {menus.map(([m, w]) => <span key={m} className={`${w} shrink-0`}>{m}</span>)}
      </div>
      <Toolbar />
      <div className="flex h-[593px]">
        <DataPane />
        <div className="w-[6px] shrink-0" />
        <Cards />
        <div className="flex flex-col gap-[6px] pl-[6px]">
          <Shelf name="Columns" icon={<svg width="12" height="12" fill="none" stroke="#555" strokeWidth="2"><path d="M2 0v2M2 3.500V12M6.500 0v2M6.500 3.500V12M11 0v2M11 3.500V12" /></svg>} />
          <Shelf name="Rows" icon={<svg width="12" height="12" fill="none" stroke="#555" strokeWidth="2"><path d="M0 2h2M3.500 2H12M0 6h2M3.500 6H12M0 10h2M3.500 10H12" /></svg>} />
          <div className="h-[519px] w-[984px] border border-[#b0b0b0] bg-white">
            <div className="flex h-[51px] w-[787px] items-center justify-center pb-[2px] font-['Noto_Sans',sans-serif] text-[19.400px] font-semibold text-black">Operating Expenses</div>
            <div className="pl-[14px]"><Treemap /></div>
          </div>
        </div>
      </div>
      <SheetTabs />
      <StatusBar />
      <Taskbar />
    </div>
  );
}
